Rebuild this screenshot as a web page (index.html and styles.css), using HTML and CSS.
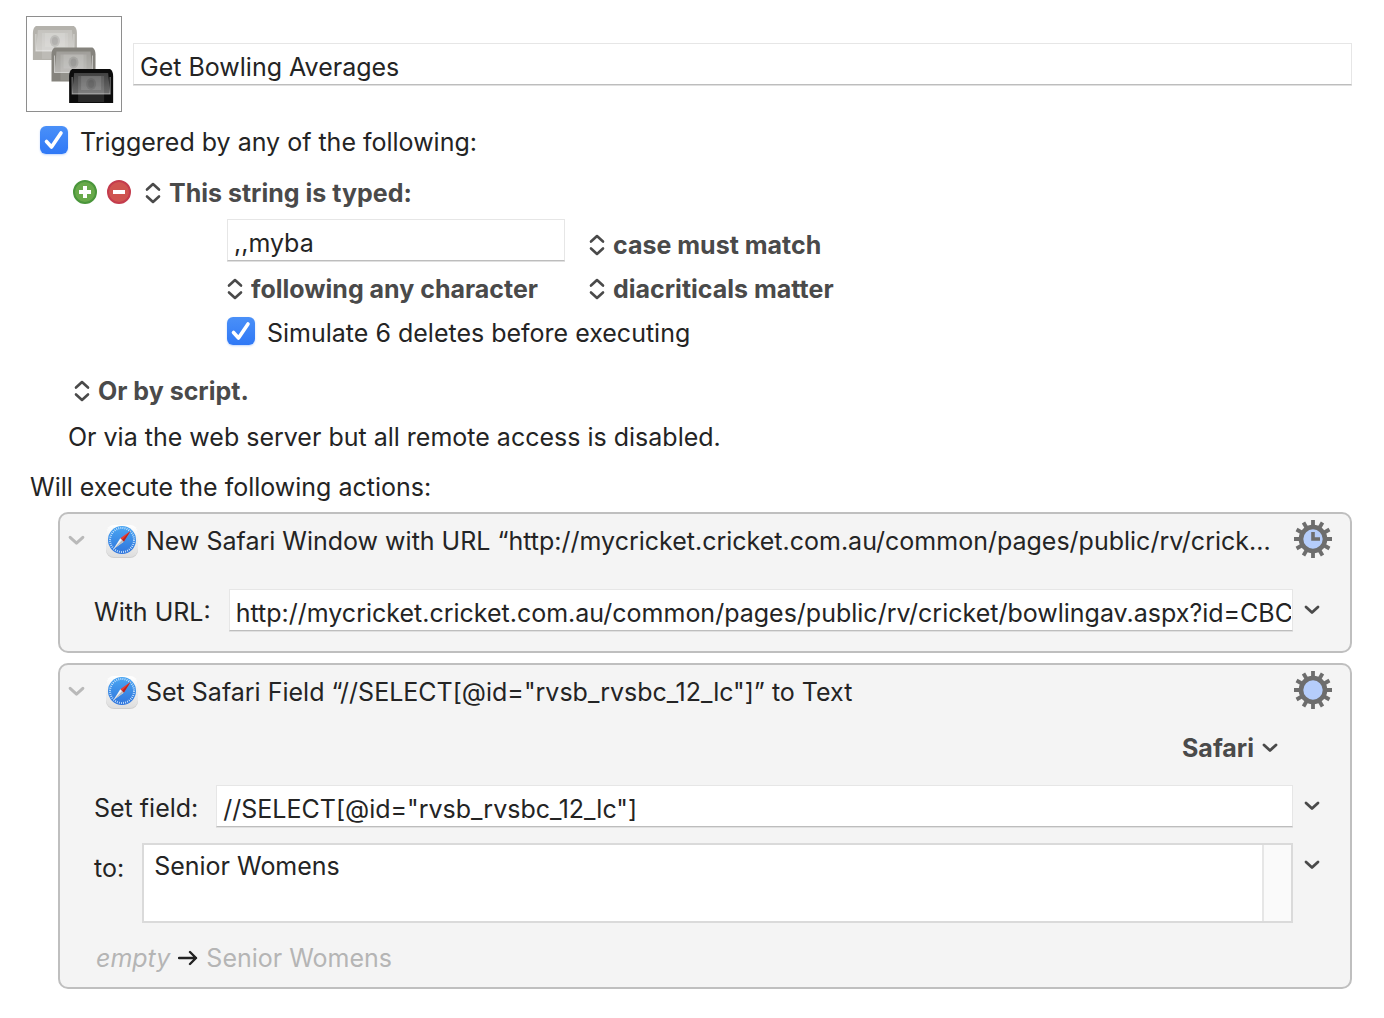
FILE: index.html
```
<!DOCTYPE html>
<html lang="en">
<head>
    <meta charset="UTF-8">
    <meta name="viewport" content="width=device-width, initial-scale=1.0">
    <title>Get Bowling Averages</title>
    <link rel="stylesheet" href="styles.css">
</head>
<body>
    <!-- Shared icons -->
    <svg class="sprite" width="0" height="0" aria-hidden="true">
        <defs>
            <linearGradient id="compass-blue" x1="0" y1="0" x2="0" y2="1">
                <stop offset="0" stop-color="#4aa6f2"/>
                <stop offset="1" stop-color="#2f74dc"/>
            </linearGradient>
            <linearGradient id="tile" x1="0" y1="0" x2="0" y2="1">
                <stop offset="0" stop-color="#ffffff"/>
                <stop offset="1" stop-color="#dedede"/>
            </linearGradient>
            <linearGradient id="glass" x1="0" y1="0" x2="0" y2="1">
                <stop offset="0" stop-color="#fff" stop-opacity="0.22"/>
                <stop offset="1" stop-color="#fff" stop-opacity="0.4"/>
            </linearGradient>
            <symbol id="updown" viewBox="0 0 16 24">
                <path d="M2 8.500 L8 3 L14 8.500 M2 15.500 L8 21 L14 15.500" fill="none" stroke="currentColor" stroke-width="2.600" stroke-linecap="round" stroke-linejoin="round"/>
            </symbol>
            <symbol id="chevron" viewBox="0 0 16 10">
                <path d="M2 2 L8 7.500 L14 2" fill="none" stroke="currentColor" stroke-width="2.800" stroke-linecap="round" stroke-linejoin="round"/>
            </symbol>
            <symbol id="check" viewBox="0 0 28 28">
                <path d="M6.500 15.500 L11.500 21 L21 7" fill="none" stroke="#fff" stroke-width="3.600" stroke-linecap="round" stroke-linejoin="round"/>
            </symbol>
            <symbol id="safari" viewBox="0 0 34 34">
                <rect x="1" y="2" width="32" height="32" rx="8" fill="#cfcfcf"/>
                <rect x="1" y="1" width="32" height="32" rx="8" fill="url(#tile)"/>
                <circle cx="17" cy="16" r="14" fill="url(#compass-blue)"/>
                <circle cx="17" cy="16" r="12" fill="none" stroke="#d8ecff" stroke-width="2" stroke-dasharray="0.800 1.300"/>
                <path d="M25.500 7 L15.300 14.300 L18.700 17.700 Z" fill="#ee3b30"/>
                <path d="M8.500 25 L15.300 14.300 L18.700 17.700 Z" fill="#f6f6f6"/>
                <path d="M25.500 7 L17 16 L18.700 17.700 Z" fill="#b3261e"/>
                <path d="M8.500 25 L17 16 L18.700 17.700 Z" fill="#b9bcc2"/>
            </symbol>
            <symbol id="gear" viewBox="0 0 38 38">
                <g stroke="#6d6d6d" stroke-width="3.800">
                    <path d="M19 0 V38"/>
                    <path d="M19 0 V38" transform="rotate(30 19 19)"/>
                    <path d="M19 0 V38" transform="rotate(60 19 19)"/>
                    <path d="M19 0 V38" transform="rotate(90 19 19)"/>
                    <path d="M19 0 V38" transform="rotate(120 19 19)"/>
                    <path d="M19 0 V38" transform="rotate(150 19 19)"/>
                </g>
                <circle cx="19" cy="19" r="12" fill="#b5cdfb" stroke="#6d6d6d" stroke-width="4.600"/>
            </symbol>
            <symbol id="screen" viewBox="0 0 46 36">
                <path d="M4 1 H42 Q45 3 45 8 V35 H1 V8 Q1 3 4 1 Z" fill="currentColor"/>
                <path d="M6 5 H40 L42 26 H4 Z" fill="url(#glass)"/>
                <rect x="10" y="8" width="26" height="26" fill="#fff" fill-opacity="0.12"/>
                <rect x="13" y="8" width="20" height="14" fill="#fff" fill-opacity="0.12"/>
                <ellipse cx="23" cy="16" rx="5" ry="6" fill="#000" fill-opacity="0.1"/>
                <ellipse cx="23" cy="16" rx="3" ry="4" fill="#000" fill-opacity="0.08"/>
                <path d="M4 9 V26 H42 V9" fill="none" stroke="#fff" stroke-opacity="0.5" stroke-width="1"/>
            </symbol>
        </defs>
    </svg>

    <header class="macro-header">
        <svg class="macro-icon" viewBox="0 0 96 96" role="img" aria-label="Macro icon">
            <use href="#screen" x="5" y="8" width="47" height="37" color="#b4b2ac"/>
            <use href="#screen" x="24" y="30" width="47" height="37" color="#85837d"/>
            <use href="#screen" x="42" y="52" width="47" height="37" color="#0c0c0c"/>
        </svg>
        <input type="text" class="text-field macro-name" value="Get Bowling Averages" aria-label="Macro name">
    </header>

    <section class="triggers">
        <label class="row check-row">
            <span class="checkbox">
                <input type="checkbox" checked>
                <svg><use href="#check"/></svg>
            </span>
            Triggered by any of the following:
        </label>

        <div class="row trigger-type">
            <button class="round-btn" aria-label="Add trigger">
                <svg viewBox="0 0 24 24">
                    <circle cx="12" cy="12" r="11" fill="#68a94a" stroke="#4a963b" stroke-width="2"/>
                    <path d="M12 6 V18 M6 12 H18" stroke="#fff" stroke-width="4"/>
                </svg>
            </button>
            <button class="round-btn" aria-label="Remove trigger">
                <svg viewBox="0 0 24 24">
                    <circle cx="12" cy="12" r="11" fill="#cf5450" stroke="#c43c4d" stroke-width="2"/>
                    <path d="M6 12 H18" stroke="#fff" stroke-width="4"/>
                </svg>
            </button>
            <span class="popup">
                <svg class="updown"><use href="#updown"/></svg>
                <select aria-label="Trigger type"><option>This string is typed:</option></select>
            </span>
        </div>

        <div class="trigger-options">
            <input type="text" class="text-field" value=",,myba" aria-label="Typed string">
            <span class="popup">
                <svg class="updown"><use href="#updown"/></svg>
                <select aria-label="Case"><option>case must match</option></select>
            </span>
            <span class="popup">
                <svg class="updown"><use href="#updown"/></svg>
                <select aria-label="Preceding character"><option>following any character</option></select>
            </span>
            <span class="popup">
                <svg class="updown"><use href="#updown"/></svg>
                <select aria-label="Diacriticals"><option>diacriticals matter</option></select>
            </span>
            <label class="row simulate">
                <span class="checkbox">
                    <input type="checkbox" checked>
                    <svg><use href="#check"/></svg>
                </span>
                Simulate 6 deletes before executing
            </label>
        </div>

        <div class="row by-script">
            <span class="popup">
                <svg class="updown"><use href="#updown"/></svg>
                <select aria-label="Script trigger"><option>Or by script.</option></select>
            </span>
        </div>
        <p class="row web-server">Or via the web server but all remote access is disabled.</p>
    </section>

    <section class="actions">
        <h2 class="row">Will execute the following actions:</h2>

        <article class="action">
            <div class="action-header">
                <button class="disclosure" aria-label="Collapse action"><svg><use href="#chevron"/></svg></button>
                <svg class="app-icon"><use href="#safari"/></svg>
                <h3>New Safari Window with URL “http://mycricket.cricket.com.au/common/pages/public/rv/crick...</h3>
                <button class="gear" aria-label="Action options">
                    <svg viewBox="0 0 38 38">
                        <use href="#gear"/>
                        <path d="M19 12 V19 H26" fill="none" stroke="#6d6d6d" stroke-width="3.600"/>
                    </svg>
                </button>
            </div>
            <div class="field-row url-row">
                <label for="url">With URL:</label>
                <input type="text" class="text-field" id="url" value="http://mycricket.cricket.com.au/common/pages/public/rv/cricket/bowlingav.aspx?id=CBC">
                <button class="more" aria-label="URL options"><svg><use href="#chevron"/></svg></button>
            </div>
        </article>

        <article class="action">
            <div class="action-header">
                <button class="disclosure" aria-label="Collapse action"><svg><use href="#chevron"/></svg></button>
                <svg class="app-icon"><use href="#safari"/></svg>
                <h3>Set Safari Field “//SELECT[@id="rvsb_rvsbc_12_lc"]” to Text</h3>
                <button class="gear" aria-label="Action options">
                    <svg><use href="#gear"/></svg>
                </button>
            </div>
            <div class="row browser-row">
                <span class="popup">
                    <select aria-label="Browser"><option>Safari</option></select>
                    <svg class="chevron"><use href="#chevron"/></svg>
                </span>
            </div>
            <div class="field-row set-row">
                <label for="field">Set field:</label>
                <input type="text" class="text-field" id="field" value="//SELECT[@id=&quot;rvsb_rvsbc_12_lc&quot;]">
                <button class="more" aria-label="Field options"><svg><use href="#chevron"/></svg></button>
            </div>
            <div class="field-row to-row">
                <label for="value">to:</label>
                <div class="text-area">
                    <textarea id="value">Senior Womens</textarea>
                    <div class="scroll-track"></div>
                </div>
                <button class="more" aria-label="Value options"><svg><use href="#chevron"/></svg></button>
            </div>
            <p class="row result">
                <em>empty</em>
                <svg class="arrow" viewBox="0 0 20 16"><path d="M1 8 H18 M12 2 L18 8 L12 14" fill="none" stroke="#222" stroke-width="2.400" stroke-linecap="round" stroke-linejoin="round"/></svg>
                <span>Senior Womens</span>
            </p>
        </article>
    </section>
</body>
</html>
```
FILE: styles.css
```
* {
    box-sizing: border-box;
}
body {
    margin: 0;
    padding: 16px 32px 28px 26px;
    background-color: #fff;
    color: #242424;
    font-family: Inter, "Liberation Sans", sans-serif;
    font-size: 25px;
    line-height: 32px;
}
h2, h3, p {
    margin: 0;
    font-size: 25px;
    font-weight: 400;
}
svg {
    display: block;
    flex-shrink: 0;
}
button {
    display: block;
    flex-shrink: 0;
    padding: 0;
    border: none;
    background: none;
    cursor: pointer;
}
input, select, textarea {
    font: inherit;
    color: inherit;
}
.sprite {
    position: absolute;
}
.row {
    display: flex;
    align-items: center;
    height: 32px;
}
.text-field {
    min-width: 0;
    height: 42px;
    padding: 6px 1px 0 6px;
    border: 1px solid #e6e6e6;
    border-bottom-color: #bdbdbd;
    background-color: #fff;
    box-shadow: 0 1px 0 #e0e0e0;
    outline: none;
}

/* Header */
.macro-header {
    display: flex;
    align-items: center;
    gap: 11px;
}
.macro-icon {
    width: 96px;
    height: 96px;
    border: 1px solid #8e8e8e;
}
.macro-name {
    flex: 1;
}

/* Checkboxes and popups */
.check-row, .simulate {
    gap: 12px;
}
.checkbox {
    position: relative;
    width: 28px;
    height: 28px;
    margin-bottom: 4px;
}
.checkbox input {
    display: block;
    width: 28px;
    height: 28px;
    margin: 0;
    appearance: none;
    border-radius: 6px;
    background: linear-gradient(#4a90f8, #2f78f6);
    box-shadow: 0 1px 2px rgba(47,120,246,0.3);
}
.checkbox svg {
    position: absolute;
    top: 0;
    left: 0;
    width: 28px;
    height: 28px;
    pointer-events: none;
}
.popup {
    display: flex;
    align-items: center;
    gap: 8px;
    color: #4a4a4a;
    font-weight: 700;
}
.popup select {
    height: 32px;
    padding: 0;
    border: none;
    appearance: none;
    background: none;
    outline: none;
}
.updown {
    width: 16px;
    height: 24px;
}
.chevron, .more svg {
    width: 16px;
    height: 10px;
}

/* Triggers */
.check-row {
    margin: 14px 0 19px 14px;
}
.trigger-type {
    gap: 10px;
    margin-left: 47px;
}
.trigger-type .popup {
    margin-left: 4px;
}
.round-btn {
    margin-bottom: 2px;
}
.round-btn, .round-btn svg {
    width: 24px;
    height: 24px;
}
.trigger-options {
    display: grid;
    grid-template-columns: 338px auto;
    align-items: end;
    column-gap: 24px;
    row-gap: 12px;
    margin: 10px 0 0 201px;
}
.simulate {
    grid-column: 1 / 3;
}
.by-script {
    margin: 26px 0 14px 48px;
}
.web-server {
    margin-left: 42px;
}

/* Actions */
.actions h2 {
    margin: 18px 0 9px 4px;
}
.action {
    margin: 0 0 10px 32px;
    border: 2px solid #bfbfbf;
    border-radius: 10px;
    background-color: #f4f4f4;
}
.action:last-child {
    margin-bottom: 0;
}
.action-header {
    display: flex;
    align-items: center;
    height: 53px;
    padding: 0 18px 0 8px;
}
.action-header h3 {
    flex: 1;
    min-width: 0;
    margin: 0 12px 0 7px;
    overflow: hidden;
    white-space: nowrap;
}
.disclosure {
    margin-right: 20px;
    color: #b9b9b9;
}
.disclosure svg {
    width: 17px;
    height: 11px;
}
.app-icon {
    width: 34px;
    height: 34px;
}
.gear {
    margin-bottom: 4px;
}
.gear svg {
    width: 38px;
    height: 38px;
}
.field-row {
    display: flex;
    align-items: center;
    padding: 0 30px 0 34px;
}
.field-row .text-field {
    flex: 1;
}
.field-row label {
    flex-shrink: 0;
    margin-right: 18px;
    padding-top: 4px;
}
.more {
    margin-left: 11px;
    color: #4a4a4a;
}
.url-row {
    margin: 22px 0 20px;
}
.browser-row {
    justify-content: flex-end;
    margin: 14px 72px 21px 0;
}
.to-row {
    align-items: flex-start;
    margin: 16px 0 19px;
}
.to-row label {
    margin-top: 5px;
}
.to-row .more {
    margin-top: 17px;
}
.text-area {
    display: flex;
    flex: 1;
    height: 80px;
    border: 2px solid #dadada;
    background-color: #fff;
}
.text-area textarea {
    flex: 1;
    min-width: 0;
    padding: 5px 10px;
    border: none;
    outline: none;
    resize: none;
    overflow: hidden;
    background: none;
}
.scroll-track {
    width: 29px;
    border-left: 2px solid #e6e6e6;
    background-color: #fafafa;
}
.result {
    gap: 8px;
    margin: 0 0 13px 36px;
    color: #b5b5b5;
}
.arrow {
    width: 20px;
    height: 16px;
}
```
